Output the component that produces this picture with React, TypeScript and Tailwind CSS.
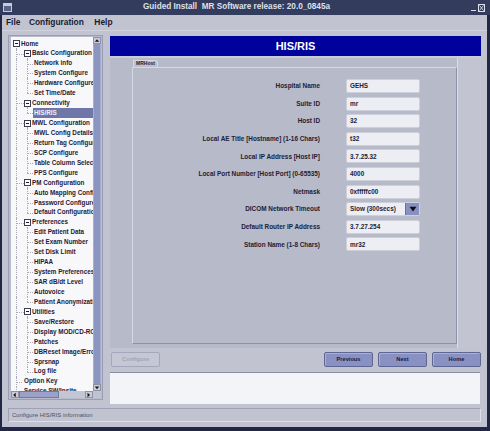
import React from 'react';

type TreeNode = { label: string; level: 0 | 1 | 2; open?: boolean; last?: boolean; selected?: boolean };

const tree: TreeNode[] = [
  { label: 'Home', level: 0, open: true },
  { label: 'Basic Configuration', level: 1, open: true },
  { label: 'Network info', level: 2 },
  { label: 'System Configure', level: 2 },
  { label: 'Hardware Configure', level: 2 },
  { label: 'Set Time/Date', level: 2, last: true },
  { label: 'Connectivity', level: 1, open: true },
  { label: 'HIS/RIS', level: 2, last: true, selected: true },
  { label: 'MWL Configuration', level: 1, open: true },
  { label: 'MWL Config Details', level: 2 },
  { label: 'Return Tag Configure', level: 2 },
  { label: 'SCP Configure', level: 2 },
  { label: 'Table Column Selection', level: 2 },
  { label: 'PPS Configure', level: 2, last: true },
  { label: 'PM Configuration', level: 1, open: true },
  { label: 'Auto Mapping Configure', level: 2 },
  { label: 'Password Configure', level: 2 },
  { label: 'Default Configuration', level: 2, last: true },
  { label: 'Preferences', level: 1, open: true },
  { label: 'Edit Patient Data', level: 2 },
  { label: 'Set Exam Number', level: 2 },
  { label: 'Set Disk Limit', level: 2 },
  { label: 'HIPAA', level: 2 },
  { label: 'System Preferences', level: 2 },
  { label: 'SAR dB/dt Level', level: 2 },
  { label: 'Autovoice', level: 2 },
  { label: 'Patient Anonymization', level: 2, last: true },
  { label: 'Utilities', level: 1, open: true },
  { label: 'Save/Restore', level: 2 },
  { label: 'Display MOD/CD-ROM', level: 2 },
  { label: 'Patches', level: 2 },
  { label: 'DBReset Image/Error', level: 2 },
  { label: 'Sprsnap', level: 2 },
  { label: 'Log file', level: 2, last: true },
  { label: 'Option Key', level: 1 },
  { label: 'Service SW/Insite', level: 1 },
];

const fields: { label: string; value: string; select?: boolean }[] = [
  { label: 'Hospital Name', value: 'GEHS' },
  { label: 'Suite ID', value: 'mr' },
  { label: 'Host ID', value: '32' },
  { label: 'Local AE Title [Hostname] (1-16 Chars)', value: 't32' },
  { label: 'Local IP Address [Host IP]', value: '3.7.25.32' },
  { label: 'Local Port Number [Host Port] (0-65535)', value: '4000' },
  { label: 'Netmask', value: '0xfffffc00' },
  { label: 'DICOM Network Timeout', value: 'Slow (300secs)', select: true },
  { label: 'Default Router IP Address', value: '3.7.27.254' },
  { label: 'Station Name (1-8 Chars)', value: 'mr32' },
];

const font = { fontFamily: '"Liberation Sans", Arial, sans-serif' };

function Expander() {
  return (
    <span className="relative z-10 flex h-[7px] w-[7px] shrink-0 items-center justify-center border border-[#3c3e50] bg-white">
      <span className="h-px w-[3px] bg-[#1a1a24]" />
    </span>
  );
}

function TreeRow({ node }: { node: TreeNode }) {
  const line = 'absolute border-dotted border-[#a9abb8]';
  return (
    <div className="relative flex h-[9.95px] items-center whitespace-nowrap">
      {node.level === 0 && <span className={`${line} left-[5px] top-1/2 h-1/2 border-l`} />}
      {node.level >= 1 && <span className={`${line} left-[5px] top-0 h-full border-l`} />}
      {node.level === 1 && (
        <span className={`${line} left-[5px] top-1/2 border-t ${node.open ? 'w-[8px]' : 'w-[6px]'}`} />
      )}
      {node.level === 1 && node.open && <span className={`${line} left-[16px] top-1/2 h-1/2 border-l`} />}
      {node.level === 2 && (
        <>
          <span className={`${line} left-[16px] top-0 border-l ${node.last ? 'h-1/2' : 'h-full'}`} />
          <span className={`${line} left-[16px] top-1/2 w-[6px] border-t`} />
        </>
      )}

      {node.level === 0 && (
        <>
          <span className="ml-[2px]"><Expander /></span>
          <span className="ml-[1px]">{node.label}</span>
        </>
      )}
      {node.level === 1 && node.open && (
        <>
          <span className="ml-[13px]"><Expander /></span>
          <span className="ml-[1px]">{node.label}</span>
        </>
      )}
      {node.level === 1 && !node.open && <span className="ml-[13px]">{node.label}</span>}
      {node.level === 2 && (
        <span
          className={`ml-[22px] flex h-full flex-1 items-center px-[1px] ${
            node.selected ? 'bg-[#6f77a8] text-[#eef0f8]' : ''
          }`}
        >
          {node.label}
        </span>
      )}
    </div>
  );
}

function Arrow({ dir }: { dir: 'up' | 'down' | 'left' | 'right' }) {
  const pts = {
    up: '1,5 4,1.5 7,5',
    down: '1,2 4,5.5 7,2',
    left: '5,1 1.5,4 5,7',
    right: '2,1 5.5,4 2,7',
  }[dir];
  return (
    <span className="flex h-[7px] w-[8px] shrink-0 items-center justify-center border border-[#8e92a6] bg-[#c9ccd8]">
      <svg width="8" height="8" viewBox="0 0 8 8">
        <polygon points={pts} fill="#14141c" />
      </svg>
    </span>
  );
}

function Button({ label, disabled }: { label: string; disabled?: boolean }) {
  return (
    <div
      className={`flex h-[15px] w-[49px] items-center justify-center rounded-[2px] border text-[5.7px] font-bold ${
        disabled
          ? 'border-[#a4a8ba] bg-[#c5c8d4] text-[#a0a4b6]'
          : 'border-[#5e6694] bg-[#8991c2] text-[#161a3c] shadow-[inset_1px_1px_0_#a9b0d6]'
      }`}
    >
      {label}
    </div>
  );
}

export default function App() {
  return (
    <div className="flex h-[431px] w-[490px] flex-col bg-[#222844] pb-[4px] pl-[2px] pr-[3px]" style={font}>
      {/* title bar */}
      <div className="-ml-[2px] -mr-[3px] flex h-[15px] shrink-0 items-center bg-[#343c5e] px-[3px]">
        <span className="flex h-[9px] w-[9px] flex-col border border-[#c8ccd8]">
          <span className="h-[2px] bg-[#c8ccd8]" />
          <span className="flex-1 bg-[#5a6286]" />
        </span>
        <span className="ml-[131px] text-[8.2px] font-bold text-[#dde0ea]">
          Guided Install&nbsp;&nbsp;MR Software release: 20.0_0845a
        </span>
        <span className="ml-auto mr-[2px] flex items-end gap-[2px]">
          <span className="mb-[1px] h-px w-[5px] bg-[#dde0ea]" />
          <span className="flex h-[8px] w-[7px] items-center justify-center border border-[#dde0ea]">
            <svg width="5" height="6" viewBox="0 0 5 6">
              <path d="M0.5 0.5 L4.5 5.5 M4.5 0.5 L0.5 5.5" stroke="#dde0ea" strokeWidth="0.9" />
            </svg>
          </span>
        </span>
      </div>

      {/* window body */}
      <div className="flex flex-1 flex-col bg-[#c1c4d0]">
        <div className="flex h-[16px] shrink-0 items-center border-b border-[#d0d3dd] text-[8.4px] font-bold text-[#181c32]">
          <span className="ml-[4px]">File</span>
          <span className="ml-[8.5px]">Configuration</span>
          <span className="ml-[10.5px]">Help</span>
        </div>

        <div className="ml-[6px] mt-[4px] flex h-[369px] gap-[7px]">
          {/* navigation tree */}
          <div className="flex h-[365px] w-[95px] flex-col border border-[#9a9eb2] bg-[#b9bccb] pb-[1px] pl-[2px] pr-[1px] pt-[1px]">
            <div className="flex min-h-0 flex-1">
              <div className="flex-1 overflow-hidden bg-[#f8f8fb] pt-[1.7px] text-[6.3px] font-bold leading-none text-[#1d2036]">
                {tree.map(n => (
                  <TreeRow key={n.label} node={n} />
                ))}
              </div>
              <div className="flex w-[8px] flex-col bg-[#939ac4]">
                <Arrow dir="up" />
                <div className="flex-1 border-x border-[#a8aed2] bg-[#8c94c0]" />
                <Arrow dir="down" />
              </div>
            </div>
            <div className="flex h-[7px] shrink-0">
              <Arrow dir="left" />
              <div className="w-[40px] border border-[#7078a8] bg-[#9aa2cc]" />
              <div className="flex-1 bg-[#c3c6d3]" />
              <Arrow dir="right" />
              <div className="w-[8px] bg-[#c1c4d0]" />
            </div>
          </div>

          {/* main */}
          <div className="mt-[1px] flex w-[371px] flex-col">
            <div className="flex h-[20px] shrink-0 items-center justify-center bg-[#00009c] text-[11px] font-bold text-white">
              HIS/RIS
            </div>
            <div className="flex h-[292px] shrink-0 border-t-[2px] border-[#c9ccd7] bg-[#b7bac9]">
              <div className="w-[22px]" />
              <div className="flex w-[325px] flex-col pb-[4px] pt-[2px]">
                <div className="flex h-[7px] shrink-0">
                  <div className="ml-[1px] flex w-[25px] items-center rounded-tr-[3px] border-l border-r border-t border-[#d6d9e3] bg-[#bdc0ce] pl-[2px] text-[5px] font-bold text-[#1d2036]">
                    MRHost
                  </div>
                </div>
                <div className="flex flex-1 flex-col gap-[3.6px] border border-b-[#8e92a6] border-l-[#d6d9e3] border-r-[#8e92a6] border-t-[#d6d9e3] pt-[11px]">
                  {fields.map(f => (
                    <div key={f.label} className="flex h-[14px] items-center">
                      <span className="w-[187px] text-right text-[6.4px] font-bold text-[#1d2036]">{f.label}</span>
                      <div className="ml-[26px] flex h-[14px] w-[74px] items-center rounded-[2px] border border-[#cdd0db] bg-[#eceef4] text-[6.4px] font-bold text-[#1d2036]">
                        <span className="flex-1 pl-[3px]">{f.value}</span>
                        {f.select && (
                          <span className="flex h-full w-[14px] items-center justify-center border-l border-[#6a72a0] bg-[#8890c2]">
                            <svg width="8" height="6" viewBox="0 0 8 6">
                              <polygon points="0.5,0.8 7.5,0.8 4,5.5" fill="#0e0e16" />
                            </svg>
                          </span>
                        )}
                      </div>
                    </div>
                  ))}
                </div>
              </div>
              <div className="flex-1 border-l border-[#dadde6] bg-[#c2c5d1]" />
            </div>

            <div className="mt-[4px] flex h-[15px] shrink-0 items-center">
              <div className="ml-[1px]">
                <Button label="Configure" disabled />
              </div>
              <div className="ml-auto flex gap-[5px]">
                <Button label="Previous" />
                <Button label="Next" />
                <Button label="Home" />
              </div>
            </div>

            <div className="mt-[5px] h-[32px] w-[370px] shrink-0 border-t border-[#8a8ea4] bg-[#f3f4f8]" />
          </div>
        </div>

        <div className="ml-[6px] mt-[4px] flex h-[14px] w-[473px] shrink-0 items-center border border-b-[#dde0e8] border-l-[#9ea2b4] border-r-[#dde0e8] border-t-[#9ea2b4] pl-[3px] text-[6px] text-[#4c5068]">
          Configure HIS/RIS information
        </div>
      </div>
    </div>
  );
}
